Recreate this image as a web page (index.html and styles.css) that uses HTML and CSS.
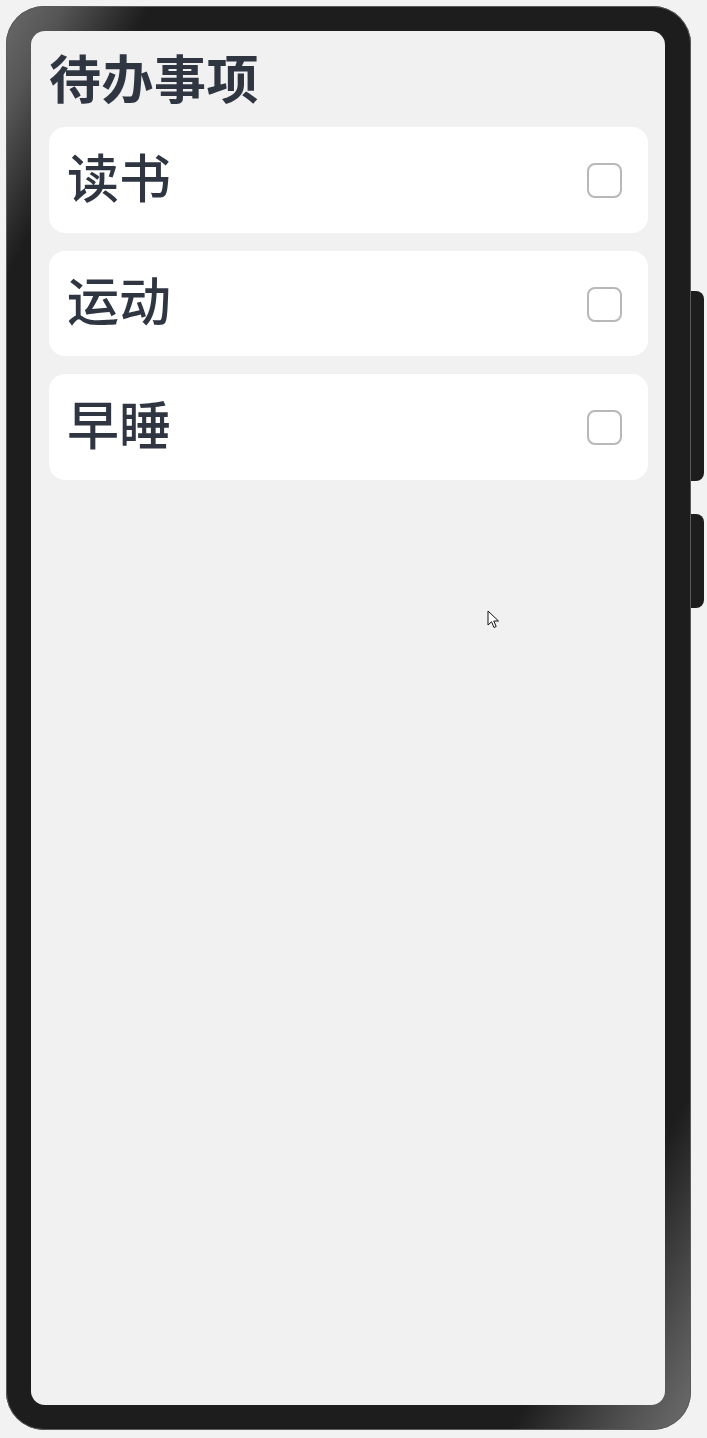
FILE: index.html
```html
<!DOCTYPE html>
<html lang="zh">
<head>
<meta charset="utf-8">
<title>待办事项</title>
<link rel="stylesheet" href="styles.css">
</head>
<body>
<div class="device">
  <div class="side-btn side-btn-power"></div>
  <div class="side-btn side-btn-vol"></div>
  <div class="phone">
    <div class="screen">
      <h1 class="title">待办事项</h1>
      <ul class="todo-list">
        <li class="todo-item"><span class="todo-text">读书</span><span class="checkbox"></span></li>
        <li class="todo-item"><span class="todo-text">运动</span><span class="checkbox"></span></li>
        <li class="todo-item"><span class="todo-text">早睡</span><span class="checkbox"></span></li>
      </ul>
    </div>
  </div>
  <svg class="cursor" width="14" height="20" viewBox="0 0 14 20" xmlns="http://www.w3.org/2000/svg">
    <path d="M1 1 L1 15 L4.5 11.8 L7 17.5 L9.2 16.5 L6.8 11 L11.5 11 Z" fill="#ffffff" stroke="#111111" stroke-width="1" stroke-linejoin="miter"/>
  </svg>
</div>
</body>
</html>
```

FILE: styles.css
```css
html, body {
  margin: 0;
  padding: 0;
  background: #f2f2f2;
}

body {
  font-family: "Noto Sans CJK SC", "Noto Sans", sans-serif;
  width: 707px;
  height: 1438px;
  overflow: hidden;
}

.device {
  position: relative;
  width: 707px;
  height: 1438px;
  padding: 6px 0 0 6px;
  box-sizing: border-box;
}

.phone {
  position: relative;
  z-index: 1;
  width: 685px;
  height: 1424px;
  box-sizing: border-box;
  padding: 25px 26px 0 25px;
  border-radius: 38px;
  background:
    linear-gradient(118deg, #6a6a6a 0%, #555555 4%, #2a2a2a 8.5%, #1d1d1d 10%, #1d1d1d 87.5%, #2e2e2e 90%, #505050 95%, #6e6e6e 100%);
  box-shadow: 0 0 0 1px #5a5a5a inset;
}

.screen {
  height: 1374px;
  background: #f1f1f1;
  border-radius: 14px;
  padding: 10px 17px 0 18px;
  box-sizing: border-box;
  overflow: hidden;
}

.title {
  margin: 0 0 14px 0;
  font-size: 52px;
  line-height: 72px;
  font-weight: 700;
  color: #303641;
  letter-spacing: 0.5px;
}

.todo-list {
  list-style: none;
  margin: 0;
  padding: 0;
  display: flex;
  flex-direction: column;
  gap: 18px;
}

.todo-item {
  height: 105.5px;
  background: #ffffff;
  border-radius: 16px;
  display: flex;
  align-items: center;
  justify-content: space-between;
  padding: 0 26px 0 18px;
  box-sizing: border-box;
}

.todo-text {
  font-size: 52px;
  line-height: 1;
  color: #303641;
  font-weight: 500;
  margin-bottom: 8px;
}

.checkbox {
  width: 35px;
  height: 35px;
  box-sizing: border-box;
  border: 2px solid #b8b8b8;
  border-radius: 8px;
  background: #ffffff;
  margin-top: 2px;
}

.side-btn {
  position: absolute;
  left: 688px;
  width: 16px;
  background: #1d1d1d;
  border-radius: 0 8px 8px 0;
  z-index: 0;
}

.side-btn-power {
  top: 291px;
  height: 190px;
}

.side-btn-vol {
  top: 514px;
  height: 94px;
}

.cursor {
  position: absolute;
  left: 487px;
  top: 610px;
  z-index: 2;
}
```
